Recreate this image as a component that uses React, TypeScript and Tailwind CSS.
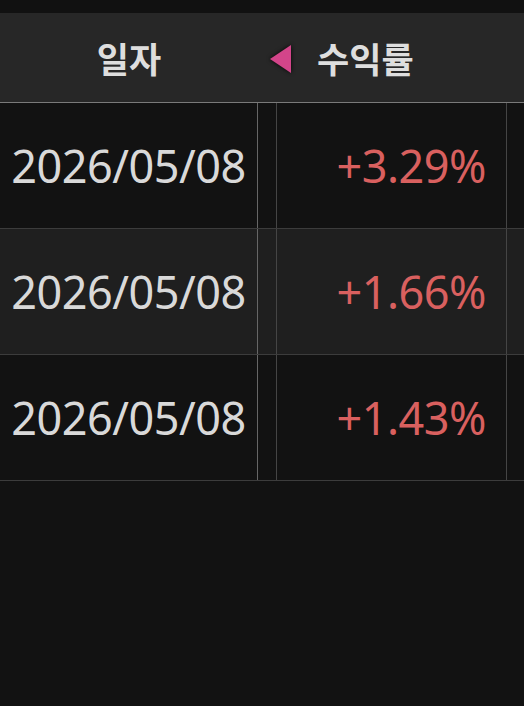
const rows = [
  { date: "2026/05/08", rate: "+3.29%", alt: false },
  { date: "2026/05/08", rate: "+1.66%", alt: true },
  { date: "2026/05/08", rate: "+1.43%", alt: false },
];

const font = { fontFamily: '"Noto Sans", "Noto Sans CJK KR", sans-serif' };

export default function App() {
  return (
    <div className="w-[524px] h-[706px] bg-[#121212] overflow-hidden" style={font}>
      <div className="h-[13px] bg-[#111111]" />

      {/* header */}
      <div className="flex h-[90px] items-center bg-[#272727] border-b border-[#7a7a7a]">
        <div className="w-[258px] flex justify-center pt-[3px] text-[35px] font-semibold text-[#dedede] leading-none">
          일자
        </div>
        <div className="flex items-center pl-[11px] pt-[3px]">
          <svg width="24" height="32" viewBox="0 0 24 32" className="drop-shadow-[0_0_2px_rgba(0,0,0,0.9)]">
            <polygon points="1,16 22,2 22,30" fill="#d3458a" />
          </svg>
          <span className="ml-[24px] text-[35px] font-semibold text-[#dedede] leading-none">수익률</span>
        </div>
      </div>

      {/* rows */}
      {rows.map((r, i) => (
        <div
          key={i}
          className={`flex h-[126px] border-b border-[#3c3c3c] ${r.alt ? "bg-[#1f1f1f]" : "bg-[#121212]"}`}
        >
          <div className="w-[258px] flex items-center justify-center text-[45px] text-[#d9d9d9] tracking-[-0.5px] border-r border-[#666666]">
            {r.date}
          </div>
          <div className="w-[19px] border-r border-[#454545]" />
          <div className="w-[230px] flex items-center justify-end pr-[20px] text-[45px] text-[#d9605f] tracking-[-0.5px] border-r border-[#454545]">
            {r.rate}
          </div>
          <div className="flex-1" />
        </div>
      ))}
    </div>
  );
}
